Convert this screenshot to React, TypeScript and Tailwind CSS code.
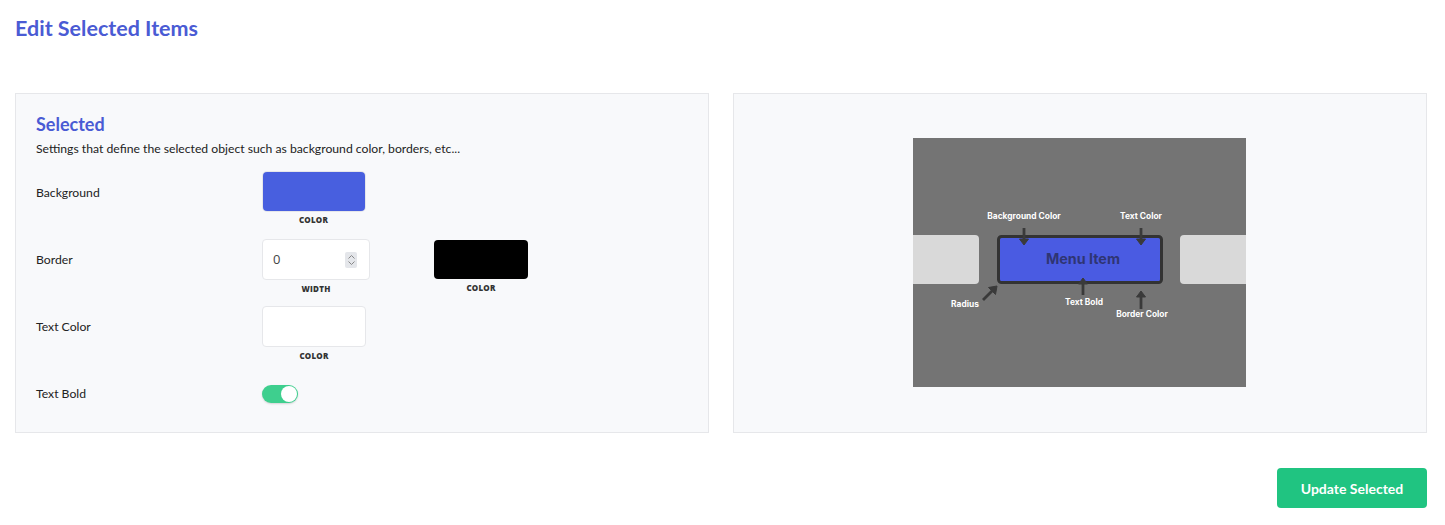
import React from "react";

function Caption({ children }: { children: React.ReactNode }) {
  return (
    <div className="text-[8px] font-extrabold tracking-[0.03em] text-[#333] text-center leading-none mt-[5px] font-['Open_Sans',sans-serif]">
      {children}
    </div>
  );
}

function Illustration() {
  const arrow = "#3a3a3a";
  return (
    <svg width="333" height="249" viewBox="0 0 333 249" className="block">
      <rect x="0" y="0" width="333" height="249" fill="#747474" />
      <rect x="-6" y="97" width="72" height="49" rx="4" fill="#d9d9d9" />
      <rect x="267" y="97" width="72" height="49" rx="4" fill="#d9d9d9" />
      <rect x="85.5" y="98.5" width="163" height="46" rx="3" fill="#4a5be2" stroke="#333" strokeWidth="3" />
      <text x="170" y="126" textAnchor="middle" fontFamily="Inter, sans-serif" fontWeight="700" fontSize="14.3" fill="#2f3573">Menu Item</text>
      <g fontFamily="Inter, sans-serif" fontWeight="700" fontSize="8.4" fill="#ffffff" textAnchor="middle">
        <text x="111" y="81">Background Color</text>
        <text x="228" y="81">Text Color</text>
        <text x="52" y="169">Radius</text>
        <text x="171" y="167">Text Bold</text>
        <text x="229" y="179">Border Color</text>
      </g>
      <g stroke={arrow} strokeWidth="2.8" fill={arrow}>
        <line x1="111" y1="90" x2="111" y2="103" />
        <polygon points="106.5,101 115.5,101 111,107" strokeWidth="1" />
        <line x1="228" y1="90" x2="228" y2="103" />
        <polygon points="223.5,101 232.5,101 228,107" strokeWidth="1" />
        <line x1="170" y1="157" x2="170" y2="145" />
        <polygon points="165.5,146 174.5,146 170,140" strokeWidth="1" />
        <line x1="228" y1="171" x2="228" y2="158" />
        <polygon points="223.5,159 232.5,159 228,153" strokeWidth="1" />
        <line x1="70" y1="162" x2="81" y2="151" />
        <polygon points="75.5,149.5 84,148 82.5,156.5" strokeWidth="1" />
      </g>
    </svg>
  );
}

export default function App() {
  return (
    <div className="w-[1445px] h-[525px] bg-white font-['Lato',sans-serif] relative">
      <div className="px-[15px] pt-[15px]">
        <h1 className="text-[21.5px] font-bold text-[#4a5bd4] leading-[26px]">Edit Selected Items</h1>
        <div className="flex gap-[24px] mt-[52px]">
          <div className="w-[694px] h-[340px] bg-[#f8f9fb] border border-[#e6e7ea] pl-[20px] pt-[19px]">
            <h2 className="text-[18px] font-bold text-[#4a5bd4] leading-[22px]">Selected</h2>
            <p className="text-[12.2px] text-[#222] leading-[16px] mt-[6px]">
              Settings that define the selected object such as background color, borders, etc...
            </p>
            <div className="flex flex-col mt-[15px]">
              <div className="flex h-[67px]">
                <div className="w-[226px] text-[12.2px] text-[#222] pt-[12px]">Background</div>
                <div className="flex flex-col items-center w-[103px]">
                  <div className="w-[102px] h-[39px] rounded-[4px] bg-[#485fdf] shadow-[0_0_0_1px_#e6e7ea]" />
                  <Caption>COLOR</Caption>
                </div>
              </div>
              <div className="flex h-[67px]">
                <div className="w-[226px] text-[12.2px] text-[#222] pt-[12px]">Border</div>
                <div className="flex flex-col items-center w-[108px]">
                  <div className="w-[108px] h-[41px] rounded-[4px] bg-white border border-[#e6e7ea] flex items-center pl-[10px] pr-[12px]">
                    <span className="text-[13px] text-[#444] font-['Open_Sans',sans-serif] flex-1">0</span>
                    <div className="w-[12px] h-[16px] rounded-[2px] bg-[#e4e6ea] flex flex-col items-center justify-center gap-[2px]">
                      <svg width="7" height="4" viewBox="0 0 7 4"><path d="M0.5 3.5 L3.5 0.5 L6.5 3.5" stroke="#888" strokeWidth="1" fill="none" /></svg>
                      <svg width="7" height="4" viewBox="0 0 7 4"><path d="M0.5 0.5 L3.5 3.5 L6.5 0.5" stroke="#888" strokeWidth="1" fill="none" /></svg>
                    </div>
                  </div>
                  <Caption>WIDTH</Caption>
                </div>
                <div className="flex flex-col items-center w-[94px] ml-[64px] pt-[1px]">
                  <div className="w-[94px] h-[39px] rounded-[4px] bg-black" />
                  <Caption>COLOR</Caption>
                </div>
              </div>
              <div className="flex h-[67px]">
                <div className="w-[226px] text-[12.2px] text-[#222] pt-[12px]">Text Color</div>
                <div className="flex flex-col items-center w-[104px]">
                  <div className="w-[104px] h-[41px] rounded-[4px] bg-white border border-[#e6e7ea]" />
                  <Caption>COLOR</Caption>
                </div>
              </div>
              <div className="flex h-[40px]">
                <div className="w-[226px] text-[12.2px] text-[#222] pt-[12px]">Text Bold</div>
                <div className="pt-[12px]">
                  <div className="w-[36px] h-[18px] rounded-full bg-[#3ecf8e] relative shadow-[0_1px_2px_rgba(0,0,0,0.15)]">
                    <div className="absolute right-[1px] top-[1px] w-[16px] h-[16px] rounded-full bg-white" />
                  </div>
                </div>
              </div>
            </div>
          </div>
          <div className="w-[694px] h-[340px] bg-[#f8f9fb] border border-[#e6e7ea] flex justify-center pt-[44px] pr-[2px]">
            <Illustration />
          </div>
        </div>
        <div className="flex justify-end mt-[35px] pr-[3px]">
          <button className="w-[150px] h-[40px] rounded-[4px] bg-[#20c481] text-white text-[14px] font-bold">
            Update Selected
          </button>
        </div>
      </div>
    </div>
  );
}
